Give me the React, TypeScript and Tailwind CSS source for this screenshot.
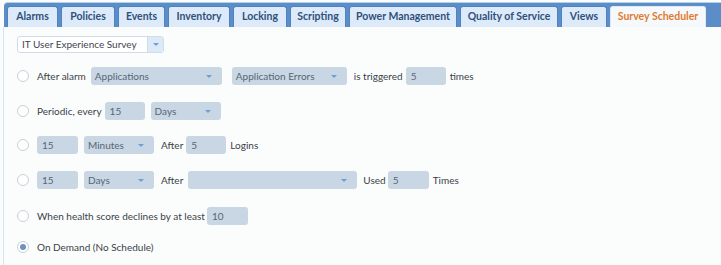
import React from "react";

const tabs = [
  { label: "Alarms", w: "w-[51px]" },
  { label: "Policies", w: "w-[54px]" },
  { label: "Events", w: "w-[47px]" },
  { label: "Inventory", w: "w-[62px]" },
  { label: "Locking", w: "w-[54px]" },
  { label: "Scripting", w: "w-[56px]" },
  { label: "Power Management", w: "w-[108px]" },
  { label: "Quality of Service", w: "w-[98px]" },
  { label: "Views", w: "w-[46px]" },
  { label: "Survey Scheduler", w: "w-[96px]", active: true },
];

function Arrow() {
  return <span className="ml-auto mr-[10px] h-0 w-0 border-x-[3px] border-t-[3px] border-x-transparent border-t-[#6d9fd6]" />;
}

function Select({ value, w }: { value: string; w: string }) {
  return (
    <div className={`${w} flex h-[18px] items-center rounded-[3px] bg-[#c9d7e4] pl-[4px] text-[#566573]`}>
      <span>{value}</span>
      <Arrow />
    </div>
  );
}

function Field({ value, w }: { value: string; w: string }) {
  return (
    <div className={`${w} flex h-[18px] items-center rounded-[3px] bg-[#c9d7e4] pl-[5px] text-[#566573]`}>
      {value}
    </div>
  );
}

function Radio({ checked }: { checked?: boolean }) {
  return (
    <span className="mr-[8px] flex h-[12px] w-[12px] items-center justify-center rounded-full border border-[#c9d0d7] bg-white">
      {checked && <span className="h-[6px] w-[6px] rounded-full bg-[#6f91bd]" />}
    </span>
  );
}

function Row({ children, className = "" }: { children: React.ReactNode; className?: string }) {
  return <div className={`flex h-[18px] items-center ${className}`}>{children}</div>;
}

export default function App() {
  return (
    <div className="h-[265px] w-[721px] overflow-hidden bg-[#fbfdfd] font-['Lato',sans-serif] text-[10px] text-[#3a3f46]">
      <div className="ml-[4px] mt-[2px] flex h-[25px] items-end gap-[3px] rounded-tl-[4px] border-t border-[#b7d0ea] bg-[#5b8dc9] pl-[3px]">
        {tabs.map((t) => (
          <div
            key={t.label}
            className={`${t.w} flex h-[21px] shrink-0 items-center justify-center rounded-t-[3px] border border-b-0 text-[10.5px] font-bold ${
              t.active
                ? "border-[#dfe9f4] bg-[#f6f9fb] text-[#e0792c]"
                : "border-[#4f82be] bg-[#dceafa] text-[#30507a]"
            }`}
          >
            {t.label}
          </div>
        ))}
      </div>

      <div className="ml-[3px] h-full border-l border-[#d8e5f1] pl-[13px] pt-[9px]">
        <div className="flex h-[17px] w-[147px] items-center rounded-[3px] border border-[#cfdde9] bg-white">
          <span className="pl-[4px] text-[#3e4650]">IT User Experience Survey</span>
          <span className="ml-auto flex h-full w-[16px] items-center justify-center rounded-r-[3px] border-l border-[#cfdde9] bg-[#dbe9f9]">
            <span className="h-0 w-0 border-x-[3px] border-t-[3px] border-x-transparent border-t-[#6d9fd6]" />
          </span>
        </div>

        <Row className="mt-[14px]">
          <Radio />
          <span className="mr-[5px]">After alarm</span>
          <Select value="Applications" w="w-[131px]" />
          <span className="w-[10px]" />
          <Select value="Application Errors" w="w-[115px]" />
          <span className="ml-[7px] mr-[3px]">is triggered</span>
          <Field value="5" w="w-[40px]" />
          <span className="ml-[4px]">times</span>
        </Row>

        <Row className="mt-[17px]">
          <Radio />
          <span className="mr-[3px]">Periodic, every</span>
          <Field value="15" w="w-[40px]" />
          <span className="w-[6px]" />
          <Select value="Days" w="w-[70px]" />
        </Row>

        <Row className="mt-[16px]">
          <Radio />
          <Field value="15" w="w-[41px]" />
          <span className="w-[6px]" />
          <Select value="Minutes" w="w-[70px]" />
          <span className="ml-[7px] mr-[3px]">After</span>
          <Field value="5" w="w-[40px]" />
          <span className="ml-[4px]">Logins</span>
        </Row>

        <Row className="mt-[17px]">
          <Radio />
          <Field value="15" w="w-[41px]" />
          <span className="w-[6px]" />
          <Select value="Days" w="w-[70px]" />
          <span className="ml-[7px] mr-[5px]">After</span>
          <Select value="" w="w-[169px]" />
          <span className="ml-[6px] mr-[2px]">Used</span>
          <Field value="5" w="w-[41px]" />
          <span className="ml-[4px]">Times</span>
        </Row>

        <Row className="mt-[18px]">
          <Radio />
          <span className="mr-[2px]">When health score declines by at least</span>
          <Field value="10" w="w-[41px]" />
        </Row>

        <Row className="mt-[13px]">
          <Radio checked />
          <span>On Demand (No Schedule)</span>
        </Row>
      </div>
    </div>
  );
}
